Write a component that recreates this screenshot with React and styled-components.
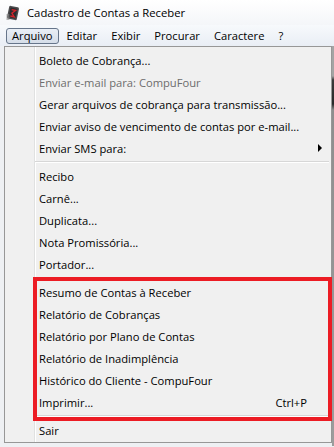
import styled, { createGlobalStyle, css } from "styled-components";

const GlobalStyle = createGlobalStyle`
  html, body {
    margin: 0;
    padding: 0;
    background: #eef0f3;
  }
  * {
    box-sizing: border-box;
  }
`;

const FONT = `"Open Sans", "Noto Sans", sans-serif`;

const Window = styled.div`
  position: relative;
  width: 334px;
  height: 447px;
  overflow: hidden;
  font-family: ${FONT};
  font-size: 11.2px;
  color: #000;
  background: #eef0f3;
`;

const TitleBar = styled.div`
  height: 25px;
  display: flex;
  align-items: center;
  gap: 6px;
  padding-left: 5px;
  background: linear-gradient(#ffffff, #f4f6f9);
`;

const TitleText = styled.span`
  font-size: 11.3px;
  color: #000;
  white-space: nowrap;
`;

const MenuBar = styled.div`
  height: 21px;
  display: flex;
  align-items: center;
  gap: 2px;
  padding-left: 6px;
  background: linear-gradient(#f7f9fc, #e9eef5);
`;

const BarItem = styled.div`
  height: 16px;
  display: flex;
  align-items: center;
  padding: 0 5px;
  border: 1px solid transparent;
  border-radius: 3px;
  white-space: nowrap;
  ${(p) =>
    p.$active &&
    css`
      border-color: #66758a;
      background: linear-gradient(#eaeff6, #d5dde8);
    `}
`;

const Body = styled.div`
  display: flex;
  align-items: flex-start;
  padding-left: 4px;
`;

const Menu = styled.div`
  width: 328px;
  border: 1px solid #979797;
  padding: 2px 2px 1px 2px;
  background: linear-gradient(
    to right,
    #f0f0f0 29px,
    #e0e1e1 29px,
    #e0e1e1 30px,
    #ffffff 30px,
    #ffffff 31px,
    #f0f0f0 31px
  );
`;

const Item = styled.div`
  height: 22px;
  display: flex;
  align-items: center;
  padding: 0 7px 0 32px;
  white-space: nowrap;
  color: ${(p) => (p.$disabled ? "#6d6d6d" : "#000")};
`;

const Shortcut = styled.span`
  margin-left: auto;
  margin-right: 15px;
`;

const Arrow = styled.span`
  margin-left: auto;
  width: 0;
  height: 0;
  border-top: 4px solid transparent;
  border-bottom: 4px solid transparent;
  border-left: 4px solid #000;
`;

const Separator = styled.div`
  height: 6px;
  margin-left: 28px;
  display: flex;
  flex-direction: column;
  justify-content: center;

  &::before {
    content: "";
    height: 1px;
    background: #d7d7d7;
  }
  &::after {
    content: "";
    height: 1px;
    background: #ffffff;
  }
`;

const Edge = styled.div`
  width: 2px;
  height: 400px;
  background: linear-gradient(
    #a4a4a4 0px,
    #a4a4a4 30px,
    #3a3a3a 34px,
    #2a2a2a 58px,
    #8e8e8e 64px,
    #9c9c9c 100%
  );
`;

const Highlight = styled.div`
  position: absolute;
  left: 33px;
  top: 277px;
  width: 299px;
  height: 144px;
  border: 4px solid #ec1c24;
  pointer-events: none;
`;

function AppIcon() {
  return (
    <svg width="16" height="16" viewBox="0 0 16 16">
      <g transform="rotate(12 8 8)">
        <rect x="3" y="1.5" width="10" height="13" rx="1.5" fill="#4b4b4d" />
        <rect x="4.5" y="3" width="7" height="10" rx="0.5" fill="#2c2c2e" />
        <path d="M6 5 L10 5 L7 8.5 L10 11.5 L6 11.5" fill="none" stroke="#d2232a" strokeWidth="1.4" />
      </g>
      <rect x="1.5" y="9" width="3" height="6" fill="#8a8a8a" opacity="0.6" />
    </svg>
  );
}

const groups = [
  [
    { label: "Boleto de Cobrança..." },
    { label: "Enviar e-mail para: CompuFour", disabled: true },
    { label: "Gerar arquivos de cobrança para transmissão..." },
    { label: "Enviar aviso de vencimento de contas por e-mail..." },
    { label: "Enviar SMS para:", submenu: true },
  ],
  [
    { label: "Recibo" },
    { label: "Carnê..." },
    { label: "Duplicata..." },
    { label: "Nota Promissória..." },
    { label: "Portador..." },
  ],
  [
    { label: "Resumo de Contas à Receber" },
    { label: "Relatório de Cobranças" },
    { label: "Relatório por Plano de Contas" },
    { label: "Relatório de Inadimplência" },
    { label: "Histórico do Cliente - CompuFour" },
    { label: "Imprimir...", shortcut: "Ctrl+P" },
  ],
  [{ label: "Sair" }],
];

const menus = ["Arquivo", "Editar", "Exibir", "Procurar", "Caractere", "?"];

export default function App() {
  return (
    <>
      <GlobalStyle />
      <Window>
        <TitleBar>
          <AppIcon />
          <TitleText>Cadastro de Contas a Receber</TitleText>
        </TitleBar>
        <MenuBar>
          {menus.map((m, i) => (
            <BarItem key={m} $active={i === 0}>
              {m}
            </BarItem>
          ))}
        </MenuBar>
        <Body>
          <Menu>
            {groups.map((group, gi) => (
              <div key={gi}>
                {gi > 0 && <Separator />}
                {group.map((item) => (
                  <Item key={item.label} $disabled={item.disabled}>
                    {item.label}
                    {item.shortcut && <Shortcut>{item.shortcut}</Shortcut>}
                    {item.submenu && <Arrow />}
                  </Item>
                ))}
              </div>
            ))}
          </Menu>
          <Edge />
        </Body>
        <Highlight />
      </Window>
    </>
  );
}
